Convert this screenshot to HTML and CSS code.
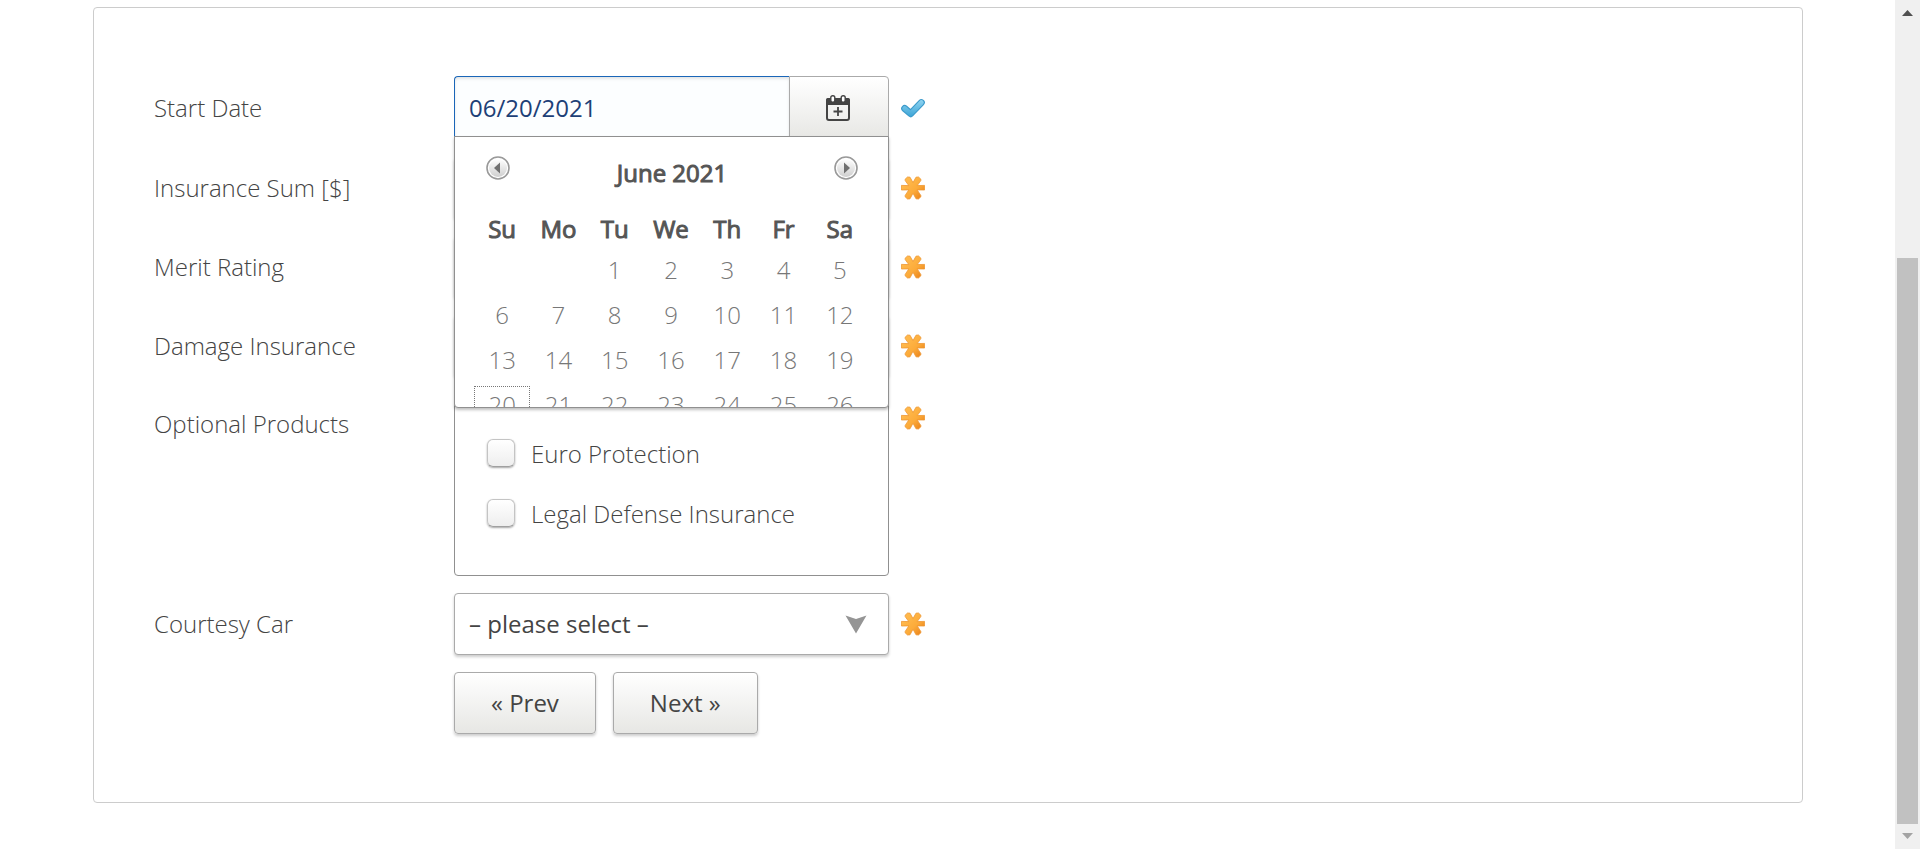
FILE: index.html
```html
<!DOCTYPE html>
<html lang="en">
<head>
<meta charset="utf-8">
<title>Enter Product Data</title>
<link rel="stylesheet" href="styles.css">
</head>
<body>
<svg class="defs" aria-hidden="true">
  <defs>
    <linearGradient id="orange" gradientUnits="userSpaceOnUse" x1="2" y1="2" x2="22" y2="22">
      <stop offset="0.2" stop-color="#ffb84a"/>
      <stop offset="0.6" stop-color="#fcab3a"/>
      <stop offset="1" stop-color="#e87f17"/>
    </linearGradient>
    <linearGradient id="blue" gradientUnits="userSpaceOnUse" x1="0" y1="4" x2="0" y2="21">
      <stop offset="0" stop-color="#8ed3f0"/>
      <stop offset="1" stop-color="#3ba4d6"/>
    </linearGradient>
    <linearGradient id="knob" x1="0" y1="0" x2="0" y2="1">
      <stop offset="0" stop-color="#ffffff"/>
      <stop offset="1" stop-color="#cfcfcf"/>
    </linearGradient>
    <symbol id="star" viewBox="0 0 24 24">
      <path fill="url(#orange)" stroke="#ee9530" stroke-width="0.8" stroke-linejoin="round" d="M4 3.400L6.500 1L9 1.200L12 6.600L15 1.200L17.500 1L20 3.400L19.800 4.600L16.200 9.600L23.600 9.400L23.600 14L16.200 13.900L19.800 19.400L20 20.600L17.500 23L15 22.800L12 17.200L9 22.800L6.500 23L4 20.600L4.200 19.400L7.800 13.900L0.400 14L0.400 9.400L7.800 9.600L4.200 4.600Z"/>
    </symbol>
  </defs>
</svg>
<div class="page">
  <main class="content">
    <form class="card">
      <div class="row">
        <label class="label" for="start">Start Date</label>
        <div class="field date">
          <input class="date-input" id="start" type="text" value="06/20/2021">
          <button class="date-button" type="button" aria-label="Open calendar">
            <svg width="24" height="26" viewBox="0 0 24 26">
              <rect x="1" y="4" width="22" height="21" rx="2" fill="none" stroke="#444" stroke-width="2"/>
              <rect x="0" y="3" width="24" height="7" rx="2" fill="#444"/>
              <rect x="4.8" y="0.8" width="4" height="6.4" rx="1.8" fill="#fff" stroke="#444" stroke-width="1.4"/>
              <rect x="15.2" y="0.8" width="4" height="6.4" rx="1.8" fill="#fff" stroke="#444" stroke-width="1.4"/>
              <path d="M12 12v9M7.500 16.500h9" stroke="#444" stroke-width="1.8"/>
            </svg>
          </button>
          <div class="calendar">
            <div class="calendar-head">
              <button class="nav" type="button" aria-label="Previous month">
                <svg width="24" height="24" viewBox="0 0 24 24"><circle cx="12" cy="12" r="11" fill="#fff" stroke="#999" stroke-width="1.6"/><circle cx="12" cy="12" r="9" fill="url(#knob)"/><path d="M8 12l6-5.500v11z" fill="#707070"/></svg>
              </button>
              <span class="month">June 2021</span>
              <button class="nav" type="button" aria-label="Next month">
                <svg width="24" height="24" viewBox="0 0 24 24"><circle cx="12" cy="12" r="11" fill="#fff" stroke="#999" stroke-width="1.6"/><circle cx="12" cy="12" r="9" fill="url(#knob)"/><path d="M16 12l-6-5.500v11z" fill="#707070"/></svg>
              </button>
            </div>
            <table class="days">
              <thead>
                <tr><th>Su</th><th>Mo</th><th>Tu</th><th>We</th><th>Th</th><th>Fr</th><th>Sa</th></tr>
              </thead>
              <tbody>
                <tr><td></td><td></td><td><a href="#">1</a></td><td><a href="#">2</a></td><td><a href="#">3</a></td><td><a href="#">4</a></td><td><a href="#">5</a></td></tr>
                <tr><td><a href="#">6</a></td><td><a href="#">7</a></td><td><a href="#">8</a></td><td><a href="#">9</a></td><td><a href="#">10</a></td><td><a href="#">11</a></td><td><a href="#">12</a></td></tr>
                <tr><td><a href="#">13</a></td><td><a href="#">14</a></td><td><a href="#">15</a></td><td><a href="#">16</a></td><td><a href="#">17</a></td><td><a href="#">18</a></td><td><a href="#">19</a></td></tr>
                <tr><td><a class="current" href="#">20</a></td><td><a href="#">21</a></td><td><a href="#">22</a></td><td><a href="#">23</a></td><td><a href="#">24</a></td><td><a href="#">25</a></td><td><a href="#">26</a></td></tr>
              </tbody>
            </table>
          </div>
        </div>
        <svg class="mark" viewBox="0 0 24 24" aria-hidden="true">
          <path d="M3.700 12.500l6 5.200L20.300 6.600" fill="none" stroke="#3d9bcb" stroke-width="7" stroke-linecap="round" stroke-linejoin="round"/>
          <path d="M3.700 12.500l6 5.200L20.300 6.600" fill="none" stroke="url(#blue)" stroke-width="4.800" stroke-linecap="round" stroke-linejoin="round"/>
        </svg>
      </div>
      <div class="row">
        <label class="label" for="sum">Insurance Sum [$]</label>
        <select class="field select" id="sum"></select>
        <svg class="mark" aria-hidden="true"><use href="#star"/></svg>
      </div>
      <div class="row">
        <label class="label" for="merit">Merit Rating</label>
        <select class="field select" id="merit"></select>
        <svg class="mark" aria-hidden="true"><use href="#star"/></svg>
      </div>
      <div class="row">
        <label class="label" for="damage">Damage Insurance</label>
        <select class="field select" id="damage"></select>
        <svg class="mark" aria-hidden="true"><use href="#star"/></svg>
      </div>
      <div class="row row-top" role="group" aria-labelledby="optional">
        <span class="label" id="optional">Optional Products</span>
        <div class="field options">
          <label class="option"><input class="check" type="checkbox">Euro Protection</label>
          <label class="option"><input class="check" type="checkbox">Legal Defense Insurance</label>
        </div>
        <svg class="mark" aria-hidden="true"><use href="#star"/></svg>
      </div>
      <div class="row">
        <label class="label" for="courtesy">Courtesy Car</label>
        <div class="field select-wrap">
          <select class="select" id="courtesy"><option>– please select –</option></select>
          <svg class="arrow" width="22" height="19" viewBox="0 0 22 19" aria-hidden="true"><path d="M0.500 0.500L11 4l10.500-3.500L11 18.500z" fill="#959595"/></svg>
        </div>
        <svg class="mark" aria-hidden="true"><use href="#star"/></svg>
      </div>
      <div class="actions">
        <button class="button" type="button">« Prev</button>
        <button class="button" type="button">Next »</button>
      </div>
    </form>
  </main>
  <div class="scrollbar" aria-hidden="true">
    <svg class="scroll-end" viewBox="0 0 25 25"><path d="M7 16l5.500-6 5.500 6z" fill="#505050"/></svg>
    <div class="scroll-space"></div>
    <div class="scroll-thumb"></div>
    <svg class="scroll-end" viewBox="0 0 25 25"><path d="M7 9l5.500 6 5.500-6z" fill="#a3a3a3"/></svg>
  </div>
</div>
</body>
</html>
```
FILE: styles.css
```css
* {
  box-sizing: border-box;
}

body {
  margin: 0;
  background: #fff;
  color: #444;
  font-family: "Open Sans", "Noto Sans", sans-serif;
  font-size: 24px;
  line-height: 36px;
}

input,
select,
button {
  margin: 0;
  font: inherit;
  color: inherit;
}

.defs {
  position: absolute;
  width: 0;
  height: 0;
}

.page {
  display: flex;
  align-items: flex-start;
}

.content {
  flex: 1;
  padding: 7px 92px 0 93px;
}

.card {
  display: flex;
  flex-direction: column;
  gap: 17px;
  padding: 68px 60px;
  border: 1px solid #ccc;
  border-radius: 4px;
}

.row {
  display: grid;
  grid-template-columns: 288px 435px 24px;
  column-gap: 12px;
  align-items: center;
}

.row-top {
  align-items: start;
}

.row-top .label {
  padding: 12px 0;
}

.row-top .mark {
  margin-top: 12px;
}

.label {
  font-weight: 300;
}

.mark {
  width: 24px;
  height: 24px;
}

.date {
  position: relative;
  display: flex;
  height: 64px;
}

.date-input {
  flex: 1;
  min-width: 0;
  padding: 0 14px;
  border: 1px solid #1a66b8;
  border-right: 0;
  border-radius: 4px 0 0 4px;
  background: #fcfeff;
  box-shadow: inset 0 2px 3px rgba(0, 0, 0, 0.1);
  color: #1d4077;
  outline: 0;
}

.date-button {
  display: flex;
  align-items: center;
  justify-content: center;
  width: 100px;
  padding: 0 2px 0 0;
  border: 1px solid #aaa;
  border-radius: 0 4px 4px 0;
  background: linear-gradient(#fff, #e7e7e4);
}

.calendar {
  position: absolute;
  z-index: 1;
  top: 60px;
  left: 0;
  right: 0;
  height: 272px;
  overflow: hidden;
  padding: 19px 20px 0 19px;
  border: 1px solid #909090;
  border-radius: 0 0 4px 4px;
  background: #fff;
  box-shadow: 0 2px 3px rgba(0, 0, 0, 0.25);
}

.calendar-head {
  display: flex;
  align-items: flex-start;
  justify-content: space-between;
  height: 55px;
  padding: 0 10px 0 12px;
}

.nav {
  display: flex;
  padding: 0;
  border: 0;
  background: none;
}

.month,
.days th {
  color: #555;
  font-weight: 400;
  line-height: 34px;
  -webkit-text-stroke: 1px #555;
}

.days {
  width: 100%;
  border-collapse: collapse;
  table-layout: fixed;
  text-align: center;
}

.days th {
  height: 36px;
  padding: 0;
}

.days td {
  height: 45px;
  padding: 4px 0;
}

.days a {
  display: block;
  border: 1px solid transparent;
  color: #777;
  font-weight: 300;
  line-height: 35px;
  text-decoration: none;
}

.days .current {
  border: 1px dotted #777;
}

.select {
  appearance: none;
  width: 100%;
  height: 62px;
  padding: 0 14px;
  border: 1px solid #aaa;
  border-radius: 4px;
  background: #fff;
  box-shadow: 0 2px 3px rgba(0, 0, 0, 0.2);
}

.select-wrap {
  position: relative;
}

.arrow {
  position: absolute;
  top: 22px;
  right: 22px;
  pointer-events: none;
}

.options {
  padding: 29px 32px 31px;
  border: 1px solid #909090;
  border-radius: 4px;
}

.option {
  display: flex;
  align-items: center;
  gap: 16px;
  height: 60px;
  font-weight: 300;
}

.check {
  appearance: none;
  width: 28px;
  height: 28px;
  margin-bottom: 3px;
  border: 1px solid #c4c4c4;
  border-bottom-color: #a0a0a0;
  border-radius: 6px;
  background: linear-gradient(#fff, #eee);
  box-shadow: 0 1px 2px rgba(0, 0, 0, 0.35);
}

.actions {
  display: flex;
  gap: 17px;
  padding-left: 300px;
}

.button {
  height: 62px;
  padding: 0 36px;
  border: 1px solid #aaa;
  border-radius: 4px;
  background: linear-gradient(#fff, #e7e7e4);
  box-shadow: 0 2px 3px rgba(0, 0, 0, 0.2);
}

.scrollbar {
  position: sticky;
  top: 0;
  display: flex;
  flex-direction: column;
  width: 25px;
  height: 100vh;
  background: #f0f0f0;
}

.scroll-end {
  width: 25px;
  height: 25px;
}

.scroll-space {
  flex: 233;
}

.scroll-thumb {
  flex: 566;
  margin: 0 2px;
  background: #c1c1c1;
}
```
